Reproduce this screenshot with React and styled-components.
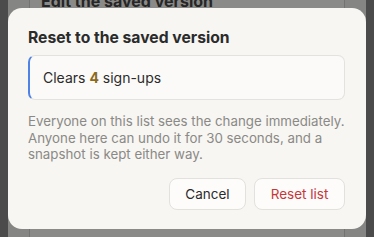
import React from 'react';
import styled, { createGlobalStyle } from 'styled-components';

const GlobalStyle = createGlobalStyle`
  html, body { margin: 0; padding: 0; }
  body {
    width: 374px;
    height: 237px;
    overflow: hidden;
    background: #4b4b4b;
    font-family: Inter, "Noto Sans", "Liberation Sans", sans-serif;
    -webkit-font-smoothing: antialiased;
  }
`;

const Backdrop = styled.div`
  position: relative;
  width: 374px;
  height: 237px;
  display: flex;
  justify-content: center;
  overflow: hidden;
`;

const Sheet = styled.div`
  width: 358px;
  height: 100%;
  background: #858583;
  display: flex;
  justify-content: center;
`;

const SheetCard = styled.div`
  width: 316px;
  border-left: 1px solid #737371;
  border-right: 1px solid #737371;
  background: #8a8a88;
  padding: 0 11px;
  box-sizing: border-box;
`;

const SheetTitle = styled.div`
  margin-top: -9px;
  font-size: 16px;
  font-weight: 700;
  color: #262626;
`;

const Dialog = styled.div`
  position: absolute;
  top: 8px;
  left: 8px;
  width: 358px;
  height: 221px;
  box-sizing: border-box;
  background: #f7f6f2;
  border-radius: 14px;
  padding: 21px 21px 0 20px;
  display: flex;
  flex-direction: column;
`;

const Title = styled.h2`
  margin: 0;
  font-size: 15.7px;
  line-height: 18px;
  font-weight: 700;
  color: #2b2b2b;
`;

const Callout = styled.div`
  margin-top: 8px;
  height: 45px;
  box-sizing: border-box;
  display: flex;
  align-items: center;
  padding-left: 13px;
  background: #fbfaf8;
  border: 1px solid #e4e2de;
  border-left: 2px solid #4f82e6;
  border-radius: 7px;
  font-size: 14px;
  color: #2b2b2b;
`;

const Count = styled.strong`
  color: #8c6a1c;
  font-weight: 700;
`;

const Note = styled.p`
  margin: 13px -10px 0 0;
  font-size: 13.3px;
  line-height: 16.5px;
  white-space: nowrap;
  color: #8a8986;
`;

const Actions = styled.div`
  margin-top: 15px;
  display: flex;
  justify-content: flex-end;
  gap: 8px;
`;

const Button = styled.button`
  height: 32px;
  padding: 0 15px;
  background: #fdfcfa;
  border: 1px solid #e3e1dd;
  border-radius: 8px;
  font-family: inherit;
  font-size: 13.5px;
  color: ${(p) => (p.$danger ? '#c4383b' : '#2b2b2b')};
  min-width: ${(p) => (p.$danger ? '91px' : '77px')};
`;

export default function App() {
  return (
    <>
      <GlobalStyle />
      <Backdrop>
        <Sheet>
          <SheetCard>
            <SheetTitle>Edit the saved version</SheetTitle>
          </SheetCard>
        </Sheet>
        <Dialog>
          <Title>Reset to the saved version</Title>
          <Callout>
            <span>
              Clears <Count>4</Count> sign-ups
            </span>
          </Callout>
          <Note>
            Everyone on this list sees the change immediately.
            <br />
            Anyone here can undo it for 30 seconds, and a
            <br />
            snapshot is kept either way.
          </Note>
          <Actions>
            <Button>Cancel</Button>
            <Button $danger>Reset list</Button>
          </Actions>
        </Dialog>
      </Backdrop>
    </>
  );
}
